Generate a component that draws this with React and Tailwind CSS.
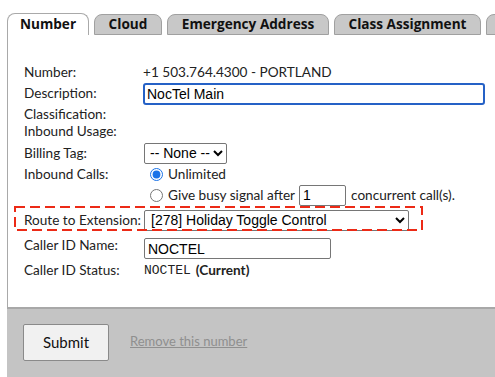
import React from 'react';

const tabs = [
  { label: 'Number', w: 'w-[82px]', active: true },
  { label: 'Cloud', w: 'w-[68px]' },
  { label: 'Emergency Address', w: 'w-[162px]' },
  { label: 'Class Assignment', w: 'w-[147px]' },
];

const arial = { fontFamily: '"Liberation Sans", Arial, sans-serif' };

function Row({ label, children, h = 'h-[17px]' }) {
  return (
    <div className={`flex items-center whitespace-nowrap ${h}`}>
      <div className="w-[120px] shrink-0">{label}</div>
      <div className="flex items-center">{children}</div>
    </div>
  );
}

export default function App() {
  return (
    <div className="w-[495px] h-[377px] overflow-hidden bg-white text-[#222]">
      {/* tab strip */}
      <div
        className="flex items-end gap-[5px] pl-[7px] pt-[13px] whitespace-nowrap font-bold text-[13.6px] text-[#111]"
        style={{ fontFamily: '"Open Sans", "Liberation Sans", sans-serif' }}
      >
        {tabs.map((t) =>
          t.active ? (
            <div
              key={t.label}
              className={`${t.w} shrink-0 h-[22px] rounded-t-[8px] border border-b-0 border-[#a9a9a9] bg-white flex items-center justify-center`}
            >
              {t.label}
            </div>
          ) : (
            <div
              key={t.label}
              className={`${t.w} shrink-0 h-[21px] rounded-t-[8px] border border-[#a0a0a0] bg-[#c8c8c8] flex items-center justify-center`}
            >
              {t.label}
            </div>
          )
        )}
        <div className="w-[90px] shrink-0 h-[21px] rounded-t-[8px] border border-[#a0a0a0] bg-[#c8c8c8]" />
      </div>

      {/* panel */}
      <div
        className="ml-[7px] border-l border-[#a9a9a9] h-[272px] pl-[16px] pt-[29px] leading-[17px] text-[13.6px]"
        style={{ fontFamily: 'Lato, "Open Sans", sans-serif' }}
      >
        <Row label="Number:">
          <span className="-ml-[1px]">+1 503.764.4300 - PORTLAND</span>
        </Row>
        <Row label="Description:" h="h-[25px]">
          <input
            defaultValue="NocTel Main"
            className="-ml-[1px] w-[342px] h-[22px] border-2 border-[#2561c6] rounded-[3px] px-[2px] text-[14px] text-black outline-none"
            style={arial}
          />
        </Row>
        <Row label="Classification:" />
        <Row label="Inbound Usage:" />
        <Row label="Billing Tag:" h="h-[26px]">
          <select
            className="h-[21px] border border-[#767676] rounded-[2px] bg-white text-[14px] text-black pl-[1px]"
            style={arial}
          >
            <option>-- None --</option>
          </select>
        </Row>
        <Row label="Inbound Calls:" h="h-[17px]">
          <label className="flex items-center gap-[5px] ml-[6px]">
            <input type="radio" name="ic" defaultChecked className="w-[13px] h-[13px] m-0 accent-[#1a73e8]" />
            <span>Unlimited</span>
          </label>
        </Row>
        <Row label="" h="h-[24px]">
          <label className="flex items-center gap-[5px] ml-[6px]">
            <input type="radio" name="ic" className="w-[13px] h-[13px] m-0" />
            <span>Give busy signal after</span>
          </label>
          <input
            defaultValue="1"
            className="ml-[4px] w-[47px] h-[21px] border border-[#767676] rounded-[2px] px-[3px] text-[14px] text-black outline-none"
            style={arial}
          />
          <span className="ml-[5px]">concurrent call(s).</span>
        </Row>

        <div className="relative mt-[2px]">
          <svg className="absolute -left-[10px] -top-[3px] overflow-visible" width="410" height="26">
            <rect x="1" y="1" width="407" height="23" fill="none" stroke="#ec2a16" strokeWidth="2" strokeDasharray="10 5" />
          </svg>
          <Row label="Route to Extension:" h="h-[22px]">
            <select
              className="h-[21px] w-[265px] border border-[#767676] rounded-[2px] bg-white text-[14px] text-black pl-[2px]"
              style={arial}
            >
              <option>[278] Holiday Toggle Control</option>
            </select>
          </Row>
        </div>

        <Row label="Caller ID Name:" h="h-[29px]">
          <input
            defaultValue="NOCTEL"
            className="mt-[6px] w-[187px] h-[21px] border border-[#767676] rounded-[2px] px-[3px] text-[14px] text-black outline-none"
            style={arial}
          />
        </Row>
        <Row label="Caller ID Status:" h="h-[20px]">
          <span style={{ fontFamily: '"Liberation Mono", "Courier New", monospace' }} className="text-[13px]">
            NOCTEL
          </span>
          <span className="ml-[5px] font-bold">(Current)</span>
        </Row>
      </div>

      {/* footer */}
      <div
        className="ml-[7px] h-[71px] border-t-2 border-[#a8a8a8] bg-[#c4c4c4] flex items-center pl-[16px] gap-[21px] pt-[14px] pb-[17px]"
        style={{ fontFamily: 'Lato, "Open Sans", sans-serif' }}
      >
        <button className="w-[86px] h-[37px] border border-[#8a8a8a] rounded-[2px] bg-[#f1f1f1] text-[15px] text-[#111]">
          Submit
        </button>
        <a href="#" className="text-[13px] text-[#8f8f8f] underline">
          Remove this number
        </a>
      </div>
    </div>
  );
}
